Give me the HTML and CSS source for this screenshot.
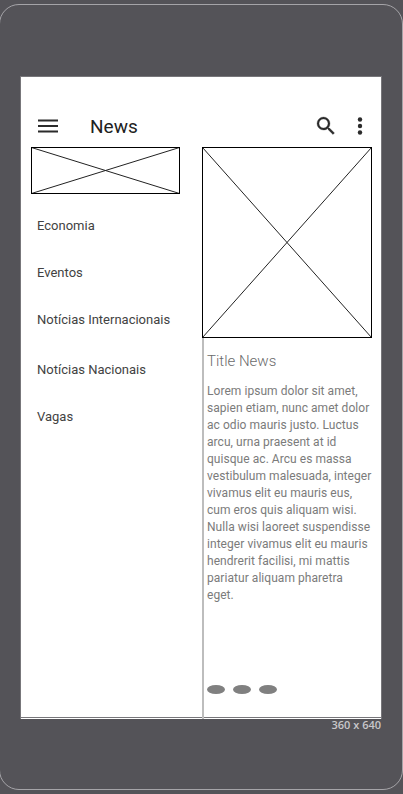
FILE: index.html
```html
<!DOCTYPE html>
<html lang="pt">
<head>
<meta charset="utf-8">
<title>News</title>
<link rel="stylesheet" href="styles.css">
</head>
<body>
<div class="device">
  <main class="screen">
    <header class="bar">
      <svg class="menu-icon" width="20" height="14" viewBox="0 0 20 14"><path d="M0 1.4h20M0 7h20M0 12.6h20" stroke="#2b2b2b" stroke-width="2"/></svg>
      <h1>News</h1>
      <svg class="search-icon" width="24" height="24" viewBox="0 0 24 24"><path fill="#2b2b2b" stroke="#2b2b2b" stroke-width=".3" d="M15.5 14h-.79l-.28-.27A6.471 6.471 0 0 0 16 9.5 6.5 6.5 0 1 0 9.5 16c1.61 0 3.09-.59 4.23-1.57l.27.28v.79l5 4.99L20.49 19l-4.99-5zm-6 0C7.01 14 5 11.99 5 9.5S7.01 5 9.5 5 14 7.01 14 9.5 11.99 14 9.5 14z"/></svg>
      <svg class="more-icon" width="6" height="18" viewBox="0 0 6 18"><g fill="#2b2b2b"><circle cx="3" cy="2.5" r="2.2"/><circle cx="3" cy="9" r="2.2"/><circle cx="3" cy="15.5" r="2.2"/></g></svg>
    </header>
    <div class="columns">
      <nav class="side">
        <svg class="banner" width="149" height="47" viewBox="0 0 149 47"><path d="M.5 .5L148.5 46.5M148.5 .5L.5 46.5" stroke="#222"/><rect x=".5" y=".5" width="148" height="46" fill="none" stroke="#000"/></svg>
        <ul>
          <li>Economia</li>
          <li>Eventos</li>
          <li class="tall">Notícias Internacionais</li>
          <li>Notícias Nacionais</li>
          <li>Vagas</li>
        </ul>
      </nav>
      <article class="story">
        <svg class="photo" width="170" height="191" viewBox="0 0 170 191"><path d="M.5 .5L169.5 190.5M169.5 .5L.5 190.5" stroke="#222"/><rect x=".5" y=".5" width="169" height="190" fill="none" stroke="#000"/></svg>
        <div class="content">
          <h2>Title News</h2>
          <p>Lorem ipsum dolor sit amet,<br>sapien etiam, nunc amet dolor<br>ac odio mauris justo. Luctus<br>arcu, urna praesent at id<br>quisque ac. Arcu es massa<br>vestibulum malesuada, integer<br>vivamus elit eu mauris eus,<br>cum eros quis aliquam wisi.<br>Nulla wisi laoreet suspendisse<br>integer vivamus elit eu mauris<br>hendrerit facilisi, mi mattis<br>pariatur aliquam pharetra<br>eget.</p>
          <div class="dots"><i></i><i></i><i></i></div>
        </div>
      </article>
    </div>
  </main>
  <div class="size">360 x 640</div>
</div>
</body>
</html>
```
FILE: styles.css
```css
* { box-sizing: border-box; }
html, body { height: 100%; }
body {
  margin: 0;
  padding-top: 4px;
  overflow: hidden;
  background: #545358;
  font-family: Roboto, sans-serif;
}
svg { display: block; flex: none; }
.device {
  width: 404px;
  height: 786px;
  margin-left: -1px;
  padding: 71px 20px 0;
  border: 1px solid #a5a4a8;
  border-radius: 20px;
}
.screen {
  display: flex;
  flex-direction: column;
  width: 362px;
  height: 643px;
  border: 1px solid #77767a;
  border-bottom: 0;
  background: linear-gradient(#77767a, #77767a) 0 640px / 100% 1px no-repeat #fff;
}
.bar {
  display: flex;
  align-items: center;
  flex: none;
  height: 70px;
  padding: 28px 18px 0 17px;
}
.bar h1 {
  flex: 1;
  margin: 2px 0 0 32px;
  font-size: 19px;
  line-height: 24px;
  font-weight: 400;
  color: #212121;
}
.search-icon { margin-right: 19px; }
.columns { display: flex; flex: 1; }
.side { width: 181px; }
.banner { margin-left: 10px; }
.side ul { margin: 0; padding: 8px 0 0 16px; list-style: none; }
.side li {
  height: 47px;
  font-size: 13px;
  line-height: 47px;
  color: #424242;
  white-space: nowrap;
}
.side .tall { height: 50px; }
.story { display: flex; flex-direction: column; width: 179px; }
.content {
  flex: 1;
  padding: 13px 0 0 3px;
  border-left: 2px solid #bdbdbd;
}
.content h2 {
  margin: 0;
  font-size: 15px;
  line-height: 20px;
  font-weight: 300;
  color: #6b6b6b;
}
.content p {
  margin: 12px 0 0;
  font-size: 12px;
  line-height: 17px;
  letter-spacing: 0.05px;
  color: #7b7b7b;
  white-space: nowrap;
}
.dots { display: flex; gap: 8px; margin-top: 81px; }
.dots i { width: 18px; height: 9px; border-radius: 50%; background: #808080; }
.size {
  width: 361px;
  margin-top: -1px;
  font: 600 11px/14px "Open Sans", sans-serif;
  color: #c8c7ca;
  text-align: right;
}
```
